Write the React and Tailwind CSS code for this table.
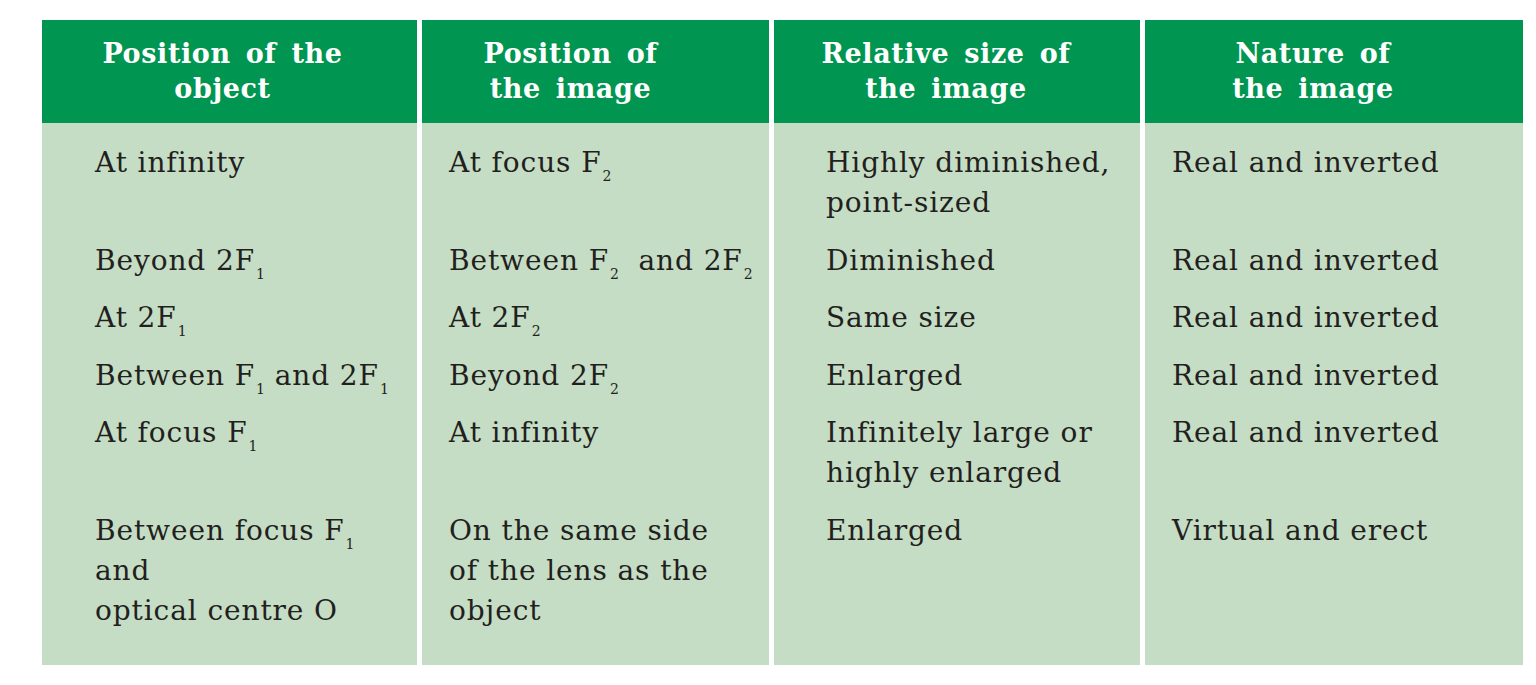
const F = ({ n }) => (
  <>
    F<sub className="text-[14px] relative top-[9px] bottom-auto ml-[1px] tracking-normal">{n}</sub>
  </>
);

const headers = [
  { lines: ["Position of the", "object"], pad: "pr-[14px]" },
  { lines: ["Position of", "the image"], pad: "pr-[50px]" },
  { lines: ["Relative size of", "the image"], pad: "pr-[22px]" },
  { lines: ["Nature of", "the image"], pad: "pr-[42px]" },
];

const rows = [
  [
    ["At infinity"],
    [<>At focus <F n="2" /></>],
    ["Highly diminished,", "point-sized"],
    ["Real and inverted"],
  ],
  [
    [<>Beyond 2<F n="1" /></>],
    [<>Between <F n="2" />&nbsp; and 2<F n="2" /></>],
    ["Diminished"],
    ["Real and inverted"],
  ],
  [
    [<>At 2<F n="1" /></>],
    [<>At 2<F n="2" /></>],
    ["Same size"],
    ["Real and inverted"],
  ],
  [
    [<>Between <F n="1" /> and 2<F n="1" /></>],
    [<>Beyond 2<F n="2" /></>],
    ["Enlarged"],
    ["Real and inverted"],
  ],
  [
    [<>At focus <F n="1" /></>],
    ["At infinity"],
    ["Infinitely large or", "highly enlarged"],
    ["Real and inverted"],
  ],
  [
    [<>Between focus <F n="1" /></>, "and", "optical centre O"],
    ["On the same side", "of the lens as the", "object"],
    ["Enlarged"],
    ["Virtual and erect"],
  ],
];

// left padding per column
const colPad = ["pl-[53px]", "pl-[27px]", "pl-[52px]", "pl-[27px]"];

export default function App() {
  return (
    <div className="w-[1536px] h-[685px] bg-white pt-[20px] pl-[42px]">
      <div
        className="grid grid-cols-[375px_347px_366px_378px] gap-x-[5px] w-[1480px]"
        style={{ fontFamily: '"DejaVu Serif", "Liberation Serif", serif' }}
      >
        {headers.map((h, i) => (
          <div
            key={i}
            className={`bg-[#009550] h-[103px] flex flex-col justify-center items-center text-white font-bold text-[27px] leading-[35px] tracking-[0.6px] [word-spacing:5px] pb-[2px] ${h.pad}`}
          >
            {h.lines.map((l, j) => (
              <div key={j} className="whitespace-nowrap">
                {l}
              </div>
            ))}
          </div>
        ))}

        {rows.map((row, r) =>
          row.map((cell, c) => (
            <div
              key={`${r}-${c}`}
              className={`bg-[#c5ddc4] text-[#231f20] text-[28px] leading-[40px] tracking-[0.9px] ${colPad[c]} ${
                r === 0 ? "pt-[20px]" : "pt-[17.5px]"
              } ${r === rows.length - 1 ? "pb-[34px]" : ""}`}
            >
              {cell.map((l, j) => (
                <div key={j} className="whitespace-nowrap">
                  {l}
                </div>
              ))}
            </div>
          ))
        )}
      </div>
    </div>
  );
}
